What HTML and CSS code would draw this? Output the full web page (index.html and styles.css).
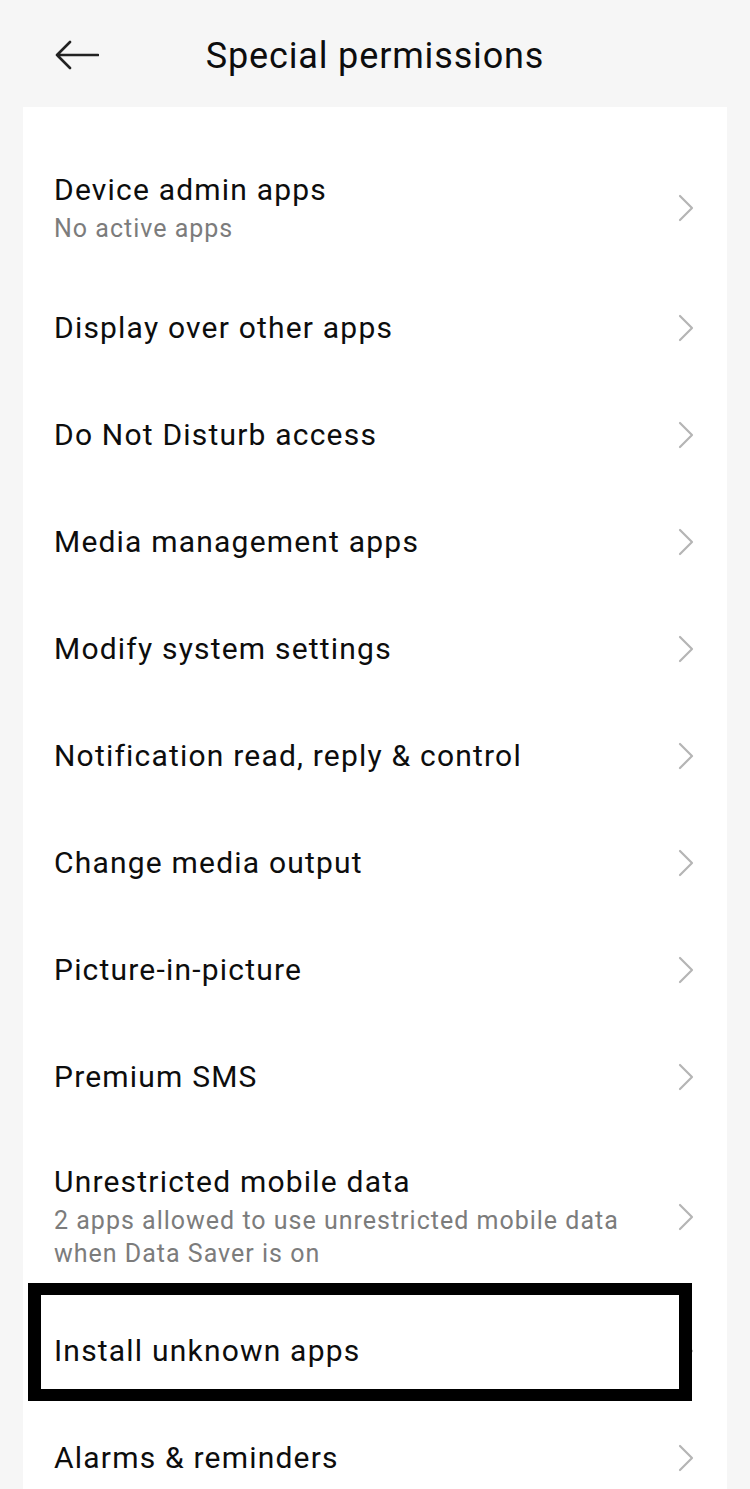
FILE: index.html
```html
<!DOCTYPE html>
<html lang="en">
<head>
<meta charset="UTF-8">
<meta name="viewport" content="width=device-width, initial-scale=1.0">
<title>Special permissions</title>
<link rel="stylesheet" href="styles.css">
</head>
<body>

<!-- HEADER -->
<div class="header">
<svg class="back" width="44" height="30" viewBox="0 0 44 30">
<path d="M43 15H2M15 2L2 15L15 28" fill="none" stroke="#222" stroke-width="2.6" stroke-linecap="round" stroke-linejoin="round"/>
</svg>
<h1>Special permissions</h1>
</div>

<!-- LIST -->
<div class="card">

<div class="row two">
<div class="text">
<div class="title">Device admin apps</div>
<div class="sub">No active apps</div>
</div>
<svg class="chev" width="16" height="28" viewBox="0 0 16 28"><path d="M2 2L14 14L2 26"/></svg>
</div>

<div class="row"><div class="text"><div class="title">Display over other apps</div></div><svg class="chev" width="16" height="28" viewBox="0 0 16 28"><path d="M2 2L14 14L2 26"/></svg></div>
<div class="row"><div class="text"><div class="title">Do Not Disturb access</div></div><svg class="chev" width="16" height="28" viewBox="0 0 16 28"><path d="M2 2L14 14L2 26"/></svg></div>
<div class="row"><div class="text"><div class="title">Media management apps</div></div><svg class="chev" width="16" height="28" viewBox="0 0 16 28"><path d="M2 2L14 14L2 26"/></svg></div>
<div class="row"><div class="text"><div class="title">Modify system settings</div></div><svg class="chev" width="16" height="28" viewBox="0 0 16 28"><path d="M2 2L14 14L2 26"/></svg></div>
<div class="row"><div class="text"><div class="title">Notification read, reply &amp; control</div></div><svg class="chev" width="16" height="28" viewBox="0 0 16 28"><path d="M2 2L14 14L2 26"/></svg></div>
<div class="row"><div class="text"><div class="title">Change media output</div></div><svg class="chev" width="16" height="28" viewBox="0 0 16 28"><path d="M2 2L14 14L2 26"/></svg></div>
<div class="row"><div class="text"><div class="title">Picture-in-picture</div></div><svg class="chev" width="16" height="28" viewBox="0 0 16 28"><path d="M2 2L14 14L2 26"/></svg></div>
<div class="row"><div class="text"><div class="title">Premium SMS</div></div><svg class="chev" width="16" height="28" viewBox="0 0 16 28"><path d="M2 2L14 14L2 26"/></svg></div>

<div class="row three">
<div class="text">
<div class="title">Unrestricted mobile data</div>
<div class="sub">2 apps allowed to use unrestricted mobile data when Data Saver is on</div>
</div>
<svg class="chev" width="16" height="28" viewBox="0 0 16 28"><path d="M2 2L14 14L2 26"/></svg>
</div>

<div class="row marked">
<div class="text"><div class="title">Install unknown apps</div></div>
<svg class="chev" width="16" height="28" viewBox="0 0 16 28"><path d="M2 2L14 14L2 26"/></svg>
<div class="mark"></div>
</div>

<div class="row"><div class="text"><div class="title">Alarms &amp; reminders</div></div><svg class="chev" width="16" height="28" viewBox="0 0 16 28"><path d="M2 2L14 14L2 26"/></svg></div>

</div>

</body>
</html>
```

FILE: styles.css
```css
body{
margin:0;
background:#f6f6f6;
font-family:Roboto,"Noto Sans",sans-serif;
color:#0d0d0d;
overflow:hidden;
}

/* HEADER */
.header{
position:relative;
height:107px;
display:flex;
align-items:center;
justify-content:center;
}
.header h1{
margin:4px 0 0 0;
font-size:36px;
font-weight:400;
letter-spacing:0.85px;
}
.back{
position:absolute;
left:55px;
top:40px;
}

/* CARD */
.card{
margin:0 23px;
background:#fff;
padding:35px 33px 0 31px;
min-height:1400px;
}

/* ROWS */
.row{
position:relative;
display:flex;
align-items:center;
padding:35px 0;
}
.row.two{padding:29px 0;}
.row.three{padding:33px 0 27px;}
.text{flex:1;}
.title{
font-size:30px;
line-height:37px;
letter-spacing:1.2px;
}
.sub{
margin-top:4px;
font-size:25px;
line-height:33px;
letter-spacing:1px;
color:#7c7c7c;
padding-right:50px;
}

/* CHEVRON */
.chev{
flex:none;
fill:none;
stroke:#b5b5b5;
stroke-width:2.2;
stroke-linecap:round;
stroke-linejoin:round;
}

/* MARK */
.mark{
position:absolute;
top:-14px;
bottom:3px;
left:-26px;
right:2px;
border:12px solid #000;
border-left-width:13px;
border-right-width:13px;
}
```
